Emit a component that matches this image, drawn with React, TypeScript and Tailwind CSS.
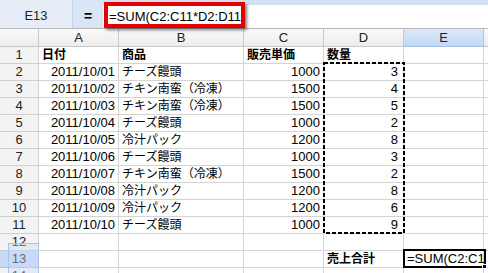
const rows: [string, string, string, string][] = [
  ["2011/10/01", "チーズ饅頭", "1000", "3"],
  ["2011/10/02", "チキン南蛮（冷凍）", "1500", "4"],
  ["2011/10/03", "チキン南蛮（冷凍）", "1500", "5"],
  ["2011/10/04", "チーズ饅頭", "1000", "2"],
  ["2011/10/05", "冷汁パック", "1200", "8"],
  ["2011/10/06", "チーズ饅頭", "1000", "3"],
  ["2011/10/07", "チキン南蛮（冷凍）", "1500", "2"],
  ["2011/10/08", "冷汁パック", "1200", "8"],
  ["2011/10/09", "冷汁パック", "1200", "6"],
  ["2011/10/10", "チーズ饅頭", "1000", "9"],
];

const cell = "h-[17px] border-r border-b border-[#d4d4d4] overflow-hidden whitespace-nowrap leading-[16px] px-[3px]";
const rowHead = "h-[17px] border-r border-b border-[#cfcfcf] bg-[#f3f3f3] text-center leading-[16px] text-[13px] text-[#222]";
const colHead = "h-[18px] border-r border-b border-[#c8c8c8] bg-gradient-to-b from-[#fafafa] to-[#ececec] text-center leading-[17px] text-[13px] text-[#222]";

export default function App() {
  return (
    <div className="relative w-[488px] h-[273px] overflow-hidden bg-white font-['Liberation_Sans','Noto_Sans_CJK_JP',sans-serif] text-black">
      {/* formula bar */}
      <div className="flex h-[29px] border-b border-[#b8b8b8]">
        <div className="w-[73px] bg-[#e6edf7] border-r border-[#c9d6ea] flex items-center justify-center text-[13px] text-[#222] pt-[4px]">
          E13
        </div>
        <div className="w-[30px] bg-[#d9e4f4] flex items-center justify-center text-[14px] font-bold pt-[4px]">
          =
        </div>
        <div className="flex-1 flex flex-col">
          <div className="h-[5px] bg-[#d3e0f5]" />
          <div className="flex-1 flex items-center pl-[6px] text-[13px] whitespace-nowrap overflow-hidden">
            =SUM(C2:C11*D2:D11)
          </div>
        </div>
      </div>

      {/* red annotation */}
      <div className="absolute left-[104px] top-[2px] w-[141px] h-[26px] border-[4px] border-[#e40000] shadow-[2px_2px_3px_rgba(0,0,0,0.5)]" />

      {/* sheet */}
      <div className="grid grid-cols-[39px_80px_125px_80px_80px_80px_1fr]">
        <div className={colHead}></div>
        <div className={colHead}>A</div>
        <div className={colHead}>B</div>
        <div className={colHead}>C</div>
        <div className={colHead}>D</div>
        <div className="h-[18px] border-r border-b border-[#a9c0e4] bg-gradient-to-b from-[#dce8fb] to-[#c3d7f6] text-center leading-[17px] text-[13px] text-[#222]">E</div>
        <div className={colHead}></div>

        <div className={rowHead}>1</div>
        <div className={`${cell} text-[12px] font-bold`}>日付</div>
        <div className={`${cell} text-[12px] font-bold`}>商品</div>
        <div className={`${cell} text-[12px] font-bold`}>販売単価</div>
        <div className={`${cell} text-[12px] font-bold`}>数量</div>
        <div className={cell}></div>
        <div className={cell}></div>

        {rows.map((r, i) => (
          <div key={i} className="contents">
            <div className={rowHead}>{i + 2}</div>
            <div className={`${cell} text-right text-[13px]`}>{r[0]}</div>
            <div className={`${cell} text-[12px]`}>{r[1]}</div>
            <div className={`${cell} text-right text-[13px]`}>{r[2]}</div>
            <div className={`${cell} text-right text-[13px] pr-[5px]`}>{r[3]}</div>
            <div className={cell}></div>
            <div className={cell}></div>
          </div>
        ))}

        <div className={rowHead}>12</div>
        <div className={cell}></div>
        <div className={cell}></div>
        <div className={cell}></div>
        <div className={cell}></div>
        <div className={cell}></div>
        <div className={cell}></div>

        <div className="h-[17px] border-r border-b border-[#a9c0e4] bg-[#c9daf8] text-center leading-[16px] text-[13px] text-[#222]">13</div>
        <div className={cell}></div>
        <div className={cell}></div>
        <div className={cell}></div>
        <div className={`${cell} text-[12px] font-bold`}>売上合計</div>
        <div className={`${cell} text-[13px] overflow-visible`}>=SUM(C2:C1</div>
        <div className={cell}></div>

        <div className={rowHead}>14</div>
        <div className={cell}></div>
        <div className={cell}></div>
        <div className={cell}></div>
        <div className={cell}></div>
        <div className={cell}></div>
        <div className={cell}></div>
      </div>

      {/* faint tooltip ghost over row headers */}
      <div className="absolute left-[8px] top-[243px] w-[31px] h-[40px] bg-[#c9daf8]/40 border border-[#aac2ea]" />

      {/* copy range marching ants */}
      <div className="absolute left-[323px] top-[62px] w-[82px] h-[172px]">
        <svg width="82" height="172" viewBox="0 0 82 172">
          <rect x="1" y="1" width="80" height="170" fill="none" stroke="#000" strokeWidth="2" strokeDasharray="4 2" />
        </svg>
      </div>

      {/* active cell E13 */}
      <div className="absolute left-[403px] top-[249px] w-[83px] h-[19px] border-2 border-black" />
      <div className="absolute left-[482px] top-[264px] w-[5px] h-[5px] bg-black border border-white" />
    </div>
  );
}
